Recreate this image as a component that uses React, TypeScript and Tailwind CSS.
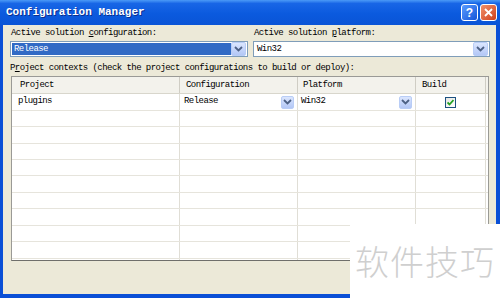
import React from 'react';

const rowHeights = [17, 16, 17, 16, 16, 17, 16, 17, 16, 17, 16];

function Chevron() {
  return (
    <svg width="9" height="6" viewBox="0 0 9 6">
      <path d="M1 1 L4.5 4.5 L8 1" fill="none" stroke="#4d6185" strokeWidth="1.8" />
    </svg>
  );
}

function ComboButton({ big }: { big?: boolean }) {
  return (
    <div
      className={`${big ? 'w-[15px] h-[14px]' : 'w-[13px] h-[13px]'} shrink-0 rounded-[2px] border border-[#b9cdf6] bg-gradient-to-b from-[#dbe6fe] to-[#b3c7f6] flex items-center justify-center`}
    >
      <Chevron />
    </div>
  );
}

function Check() {
  return (
    <div className="w-[11px] h-[11px] border border-[#1c5180] bg-gradient-to-br from-[#e5e5e2] to-white flex items-center justify-center">
      <svg width="7" height="7" viewBox="0 0 7 7">
        <path d="M0.5 3.5 L2.5 5.5 L6.5 1" fill="none" stroke="#21a121" strokeWidth="1.8" />
      </svg>
    </div>
  );
}

export default function App() {
  return (
    <div className="relative w-[500px] h-[298px] overflow-hidden bg-[#0a4fd6] flex flex-col font-['Liberation_Mono',monospace] text-black">
      {/* Title bar */}
      <div className="h-[25px] shrink-0 flex items-center pl-[6px] pr-[3px] bg-[linear-gradient(to_bottom,#4b9af7_0%,#1866e6_14%,#0b5ade_55%,#0a54d6_100%)]">
        <span className="text-[11px] font-bold text-white leading-none [text-shadow:1px_1px_0_#0a2f8f]">
          Configuration Manager
        </span>
        <div className="ml-auto flex gap-[2px]">
          <div className="w-[17px] h-[17px] rounded-[3px] border border-white bg-gradient-to-br from-[#5a9cff] to-[#1553d8] flex items-center justify-center text-white text-[12px] font-bold leading-none font-['Liberation_Sans',sans-serif]">
            ?
          </div>
          <div className="w-[17px] h-[17px] rounded-[3px] border border-white bg-gradient-to-br from-[#f0906a] to-[#cf3d16] flex items-center justify-center">
            <svg width="9" height="9" viewBox="0 0 9 9">
              <path d="M1 1 L8 8 M8 1 L1 8" stroke="white" strokeWidth="1.8" />
            </svg>
          </div>
        </div>
      </div>

      {/* Body */}
      <div className="flex-1 ml-[3px] mr-[4px] mb-[4px] bg-[#ece9d8] pl-[7px] pr-[6px] pt-[3px] flex flex-col text-[9px] tracking-[-0.55px]">
        <div className="flex gap-[5px]">
          <div className="w-[238px]">
            <div className="h-[10px] leading-[10px] pl-px">
              Active solution <span className="underline">c</span>onfiguration:
            </div>
            <div className="mt-[3px] h-[16px] border border-[#7f9db9] bg-white flex items-center p-px">
              <div className="flex-1 h-full bg-[#316ac5] text-white leading-[12px] pl-[2px]">Release</div>
              <ComboButton big />
            </div>
          </div>
          <div className="flex-1">
            <div className="h-[10px] leading-[10px] pl-px">
              Active solution <span className="underline">p</span>latform:
            </div>
            <div className="mt-[3px] h-[16px] border border-[#7f9db9] bg-white flex items-center p-px">
              <div className="flex-1 leading-[12px] pl-[2px]">Win32</div>
              <ComboButton big />
            </div>
          </div>
        </div>

        <div className="mt-[6px] h-[10px] leading-[10px]">
          P<span className="underline">r</span>oject contexts (check the project configurations to build or deploy):
        </div>

        {/* Grid */}
        <div className="mt-[3px] ml-px mr-px h-[185px] border border-[#9a9a96] border-b-[#6f6f6b] bg-white overflow-hidden">
          <div className="flex h-[17px] bg-[#f3f2ec] border-b border-[#d8d6cc] leading-[16px]">
            <div className="w-[168px] border-r border-[#cfcdc4] pl-[8px]">Project</div>
            <div className="w-[118px] border-r border-[#cfcdc4] pl-[6px]">Configuration</div>
            <div className="w-[118px] border-r border-[#cfcdc4] pl-[5px]">Platform</div>
            <div className="w-[70px] border-r border-[#cfcdc4] pl-[6px]">Build</div>
          </div>
          {rowHeights.map((h, i) => (
            <div
              key={i}
              className={`flex border-b border-[#e6e4dc] ${h === 17 ? 'h-[17px]' : 'h-[16px]'}`}
            >
              <div className="w-[168px] border-r border-[#e0ded6] pl-[6px] flex items-center">
                {i === 0 ? 'plugins' : ''}
              </div>
              <div className="w-[118px] border-r border-[#e0ded6] pl-[4px] pr-[3px] flex items-center">
                {i === 0 && (
                  <>
                    <span className="flex-1">Release</span>
                    <ComboButton />
                  </>
                )}
              </div>
              <div className="w-[118px] border-r border-[#e0ded6] pl-[3px] pr-[3px] flex items-center">
                {i === 0 && (
                  <>
                    <span className="flex-1">Win32</span>
                    <ComboButton />
                  </>
                )}
              </div>
              <div className="w-[70px] border-r border-[#e0ded6] flex items-center justify-center">
                {i === 0 && <Check />}
              </div>
            </div>
          ))}
        </div>
      </div>

      {/* Watermark */}
      <div className="absolute right-0 bottom-0 w-[150px] h-[74px] bg-white flex items-center justify-center">
        <span className="text-[34px] leading-none text-[#cfcfcf] font-['Noto_Sans_CJK_SC',sans-serif] font-light tracking-[1px]">
          软件技巧
        </span>
      </div>
    </div>
  );
}
